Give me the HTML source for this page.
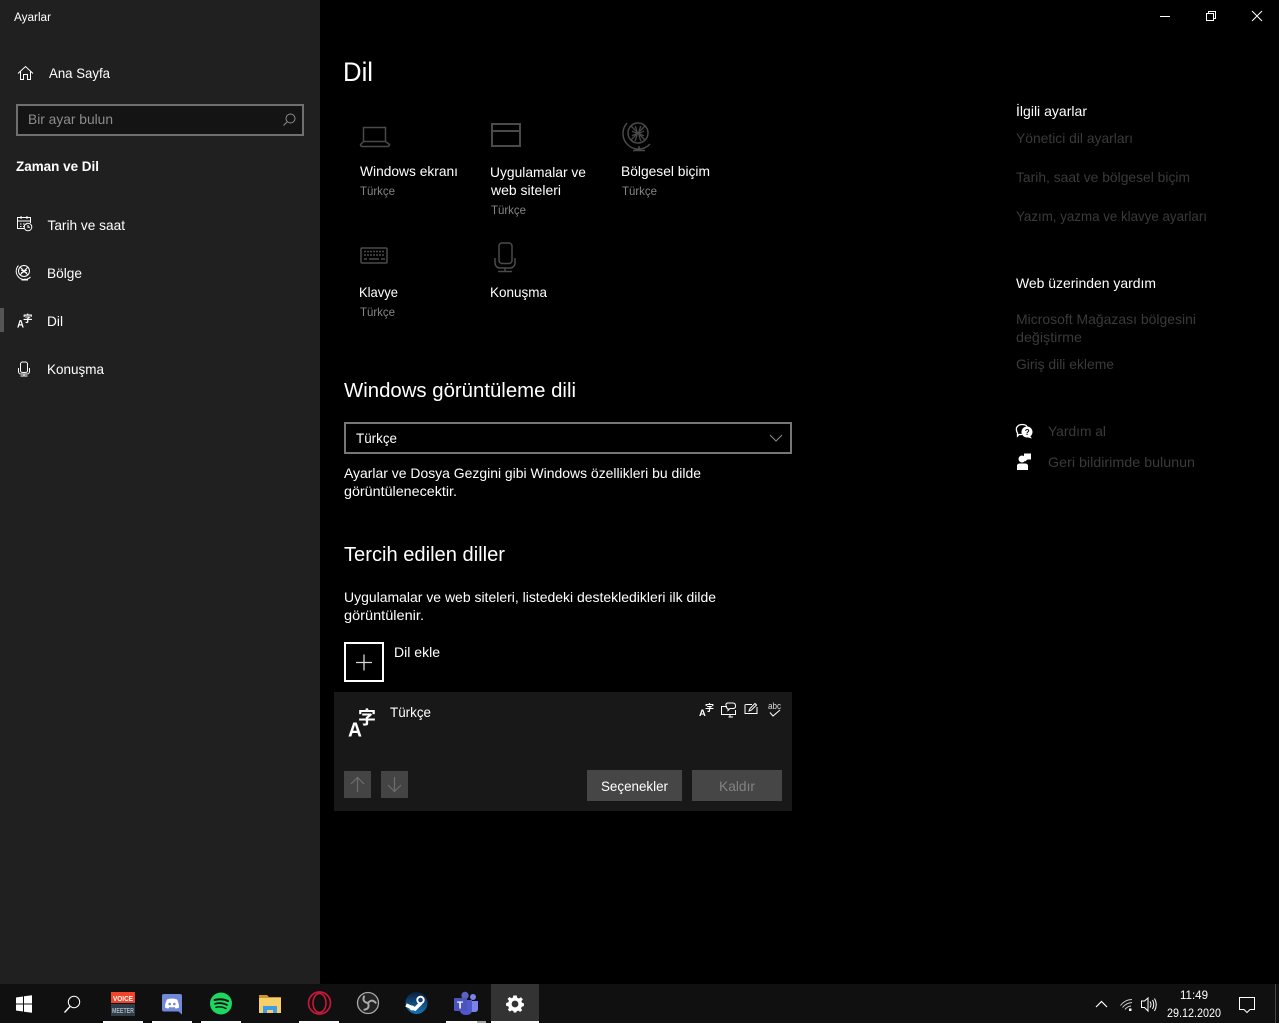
<!DOCTYPE html>
<html lang="tr"><head><meta charset="utf-8"><title>Ayarlar</title>
<style>
html,body{margin:0;padding:0;background:#000;width:1279px;height:1023px;overflow:hidden}
svg{display:block;position:absolute;left:0;top:0}
text{font-family:"Liberation Sans","Noto Sans CJK SC",sans-serif;font-size:14px;fill:#fff;white-space:pre}
.s{font-size:12px;fill:#858585}
.d{fill:#3a3a3a}
.i{fill:none;stroke:#fff;stroke-width:1}
.g{fill:none;stroke:#4a4a4a;stroke-width:1.5}
</style></head><body>
<svg width="1279" height="1023" viewBox="0 0 1279 1023" xmlns="http://www.w3.org/2000/svg">
<rect width="1279" height="1023" fill="#000"/>
<rect width="320" height="984" fill="#202020"/>

<!-- sidebar -->
<text x="14" y="21" style="font-size:11.5px" textLength="37" lengthAdjust="spacingAndGlyphs">Ayarlar</text>
<path class="i" d="M18 73.5 25.5 66.5 33 73.5M20.5 71.5V79.5H23.5V74.5H27.5V79.5H30.5V71.5"/>
<text x="49" y="78" textLength="61" lengthAdjust="spacingAndGlyphs">Ana Sayfa</text>
<rect x="17" y="105" width="286" height="30" fill="#141414" stroke="#6f6f6f" stroke-width="2"/>
<text x="28" y="124" style="fill:#8c8c8c" textLength="85" lengthAdjust="spacingAndGlyphs">Bir ayar bulun</text>
<circle cx="290.5" cy="118.5" r="4.5" fill="none" stroke="#8c8c8c"/><path d="M287 122 283.5 125.5" stroke="#8c8c8c" fill="none"/>
<text x="16" y="171" style="font-weight:700" textLength="83" lengthAdjust="spacingAndGlyphs">Zaman ve Dil</text>

<path class="i" d="M24 228.5H17.5V217.5H30.5V223M17.5 221H30.5M21 216V219M27 216V219"/>
<path stroke="#fff" stroke-dasharray="1.5 1.5" d="M20 224H27M20 226.5H24"/>
<circle class="i" cx="28" cy="227" r="3.8"/><path class="i" d="M28 225V227.3H30"/>
<text x="47.5" y="230" textLength="77.5" lengthAdjust="spacingAndGlyphs">Tarih ve saat</text>

<circle class="i" cx="24" cy="271" r="5.5" stroke-width="1.3"/><path class="i" d="M20 267 28 275M28 267 20 275M21 270Q24 272 27 270M21 273Q24 271 27 273"/><path class="i" d="M18.5 265.5A8 8 0 0 0 30.500 277M25 278.5V280M21.5 280H28"/>
<text x="47" y="278" textLength="35" lengthAdjust="spacingAndGlyphs">Bölge</text>

<rect x="0" y="308" width="4" height="24" fill="#555"/>
<text x="17" y="327.500" style="font-size:11px;font-weight:700" textLength="7" lengthAdjust="spacingAndGlyphs">A</text>
<text x="23" y="322" style="font-size:9.500px;font-weight:700">字</text>
<text x="47" y="326" textLength="16" lengthAdjust="spacingAndGlyphs">Dil</text>

<rect class="i" x="20.500" y="362" width="7" height="10.500" rx="2"/><path class="i" d="M18.500 368V371.500A2.500 2.500 0 0 0 21 374H27A2.500 2.500 0 0 0 29.500 371.500V368M24 374V376M20.500 376H27.500"/>
<text x="47" y="374" textLength="57" lengthAdjust="spacingAndGlyphs">Konuşma</text>

<!-- title bar -->
<path d="M1160 16.500H1170" stroke="#fff"/>
<path class="i" d="M1206.500 13.500H1213.500V20.500H1206.500ZM1208.500 13.500V11.500H1215.500V18.500H1213.500"/>
<path class="i" d="M1252 11 1262 21M1262 11 1252 21" />

<!-- main -->
<text x="343" y="81" style="font-size:27px" textLength="30" lengthAdjust="spacingAndGlyphs">Dil</text>

<path class="g" d="M363.500 127.500H385.500V141.500H363.500ZM363.500 141.500 360.500 144.500Q360.500 146.500 363 146.500H387Q389.500 146.500 389.500 144.500L385.500 141.500"/>
<text x="360" y="176" textLength="98" lengthAdjust="spacingAndGlyphs">Windows ekranı</text>
<text x="360" y="195" class="s" textLength="35" lengthAdjust="spacingAndGlyphs">Türkçe</text>

<path class="g" style="stroke-width:2" d="M492 124H520V146H492ZM492 131H520"/>
<text x="490" y="177" textLength="96" lengthAdjust="spacingAndGlyphs">Uygulamalar ve</text>
<text x="491" y="195" textLength="70" lengthAdjust="spacingAndGlyphs">web siteleri</text>
<text x="491" y="214" class="s" textLength="35" lengthAdjust="spacingAndGlyphs">Türkçe</text>

<circle class="g" cx="638" cy="133" r="10"/>
<path class="g" style="stroke-width:1.300" d="M631 126 645 140M645 126 631 140M632 131Q638 135 644 131M632 136Q638 132 644 136M635 126Q639 133 635 141M641 126Q637 133 641 141"/>
<path class="g" d="M627 123A15 15 0 0 0 650 144M639 146V150M633 150.500H645"/>
<text x="621" y="176" textLength="89" lengthAdjust="spacingAndGlyphs">Bölgesel biçim</text>
<text x="622" y="195" class="s" textLength="35" lengthAdjust="spacingAndGlyphs">Türkçe</text>

<rect class="g" x="361" y="248" width="26" height="15" rx="1"/>
<path stroke="#4a4a4a" stroke-width="1.500" stroke-dasharray="2 1" d="M364 251.500H385M364 255H385" fill="none"/><path stroke="#4a4a4a" stroke-width="1.500" d="M364 259H367M369 259H379M381 259H385" fill="none"/>
<text x="359" y="297" textLength="39" lengthAdjust="spacingAndGlyphs">Klavye</text>
<text x="360" y="316" class="s" textLength="35" lengthAdjust="spacingAndGlyphs">Türkçe</text>

<rect class="g" x="499" y="243" width="13" height="20.500" rx="3"/>
<path class="g" d="M495 258V263A5 5 0 0 0 500 268H510A5 5 0 0 0 515 263V258M505 268V271M498 271.500H512"/>
<text x="490" y="297" textLength="57" lengthAdjust="spacingAndGlyphs">Konuşma</text>

<text x="344" y="397" style="font-size:20px" textLength="232" lengthAdjust="spacingAndGlyphs">Windows görüntüleme dili</text>
<rect x="345" y="423" width="446" height="30" fill="#000" stroke="#767676" stroke-width="2"/>
<text x="356" y="443" textLength="41" lengthAdjust="spacingAndGlyphs">Türkçe</text>
<path d="M770 435 776 441 782 435" fill="none" stroke="#8c8c8c"/>
<text x="344" y="478" textLength="357" lengthAdjust="spacingAndGlyphs">Ayarlar ve Dosya Gezgini gibi Windows özellikleri bu dilde</text>
<text x="344" y="496" textLength="113" lengthAdjust="spacingAndGlyphs">görüntülenecektir.</text>

<text x="344" y="561" style="font-size:20px" textLength="161" lengthAdjust="spacingAndGlyphs">Tercih edilen diller</text>
<text x="344" y="602" textLength="372" lengthAdjust="spacingAndGlyphs">Uygulamalar ve web siteleri, listedeki destekledikleri ilk dilde</text>
<text x="344" y="620" textLength="80" lengthAdjust="spacingAndGlyphs">görüntülenir.</text>

<rect x="345" y="643" width="38" height="38" fill="#000" stroke="#fff" stroke-width="2"/>
<path d="M356 662.500H372M364 654.500V670.500" stroke="#d8d8d8" stroke-width="1.300"/>
<text x="394" y="657" textLength="46" lengthAdjust="spacingAndGlyphs">Dil ekle</text>

<rect x="334" y="692" width="458" height="119" fill="#181818"/>
<text x="348" y="736.500" style="font-size:20px;font-weight:700" textLength="14" lengthAdjust="spacingAndGlyphs">A</text>
<text x="358" y="724" style="font-size:18px;font-weight:700">字</text>
<text x="390" y="717" textLength="41" lengthAdjust="spacingAndGlyphs">Türkçe</text>

<text x="699" y="716" style="font-size:9.500px;font-weight:700">A</text>
<text x="705" y="711" style="font-size:9px;font-weight:700">字</text>
<path class="i" d="M727 706.500H721.500V714.500H735.500V710M728.500 717H733M730 715V717"/>
<path class="i" d="M726 704.500Q726 703 728 703H733Q735.500 703 735.500 706Q735.500 708.500 733 708.500H730L728 710.500V708.500Q726 708 726 706Z"/>
<path class="i" d="M745.500 704.500H752M757 707V713.500H745V704.500M749 711 750 708.500 755 703.500 756.500 705 751.500 710Z"/>
<text x="768" y="709" style="font-size:9px;fill:#ddd" textLength="13" lengthAdjust="spacingAndGlyphs">abc</text>
<path class="i" d="M770 712.500 773 716 780 710"/>

<rect x="344" y="771" width="27" height="27" fill="#444"/>
<rect x="381" y="771" width="27" height="27" fill="#444"/>
<path d="M357.500 777.500V792M351 784 357.500 777.500 364 784" fill="none" stroke="#6d6d6d" stroke-width="1.200"/>
<path d="M394.500 777V791.500M388 785 394.500 791.500 401 785" fill="none" stroke="#6d6d6d" stroke-width="1.200"/>
<rect x="587" y="770" width="95" height="31" fill="#464646"/>
<text x="601" y="791" textLength="67" lengthAdjust="spacingAndGlyphs">Seçenekler</text>
<rect x="692" y="770" width="90" height="31" fill="#464646"/>
<text x="719" y="791" style="fill:#828282" textLength="36" lengthAdjust="spacingAndGlyphs">Kaldır</text>

<!-- right column -->
<text x="1016" y="116" textLength="71" lengthAdjust="spacingAndGlyphs">İlgili ayarlar</text>
<text x="1016" y="143" class="d" textLength="117" lengthAdjust="spacingAndGlyphs">Yönetici dil ayarları</text>
<text x="1016" y="182" class="d" textLength="174" lengthAdjust="spacingAndGlyphs">Tarih, saat ve bölgesel biçim</text>
<text x="1016" y="221" class="d" textLength="191" lengthAdjust="spacingAndGlyphs">Yazım, yazma ve klavye ayarları</text>
<text x="1016" y="288" textLength="140" lengthAdjust="spacingAndGlyphs">Web üzerinden yardım</text>
<text x="1016" y="324" class="d" textLength="180" lengthAdjust="spacingAndGlyphs">Microsoft Mağazası bölgesini</text>
<text x="1016" y="342" class="d" textLength="66" lengthAdjust="spacingAndGlyphs">değiştirme</text>
<text x="1016" y="369" class="d" textLength="98" lengthAdjust="spacingAndGlyphs">Giriş dili ekleme</text>

<path fill="none" stroke="#fff" stroke-width="1.300" d="M1022 434.500H1019L1017.500 436V433Q1016 431 1016.500 428Q1018 424.500 1022 424.500Q1026 424.500 1027 426.500"/>
<circle cx="1027" cy="432" r="5.500" fill="#fff"/><path d="M1030 436 1032 438.500 1028 437.500Z" fill="#fff"/>
<text x="1024.800" y="435" style="font-size:8px;font-weight:700;fill:#000">?</text>
<text x="1048" y="436" class="d" textLength="58" lengthAdjust="spacingAndGlyphs">Yardım al</text>

<circle cx="1022" cy="459" r="3.500" fill="#fff"/>
<path d="M1017 470V466Q1017 463.500 1020 463.500H1025Q1028 463.500 1028 466V470Z" fill="#fff"/>
<path d="M1024 453.500H1031V459.500H1027.500L1025 461.500V459.500H1024Z" fill="#fff"/>
<text x="1048" y="467" class="d" textLength="147" lengthAdjust="spacingAndGlyphs">Geri bildirimde bulunun</text>

<!-- taskbar -->
<rect x="0" y="984" width="1279" height="39" fill="#101010"/>
<rect x="491" y="984" width="48" height="39" fill="#333"/>
<path fill="#fff" d="M16 997.500 23 996.500V1003.500H16ZM24 996.300 32 995.200V1003.500H24ZM16 1004.500H23V1011.500L16 1010.500ZM24 1004.500H32V1012.800L24 1011.700Z"/>
<circle class="i" cx="74" cy="1002" r="5.700" stroke-width="1.300"/><path class="i" style="stroke-width:1.300" d="M70 1006.500 64.500 1012.500"/>

<rect x="111" y="992" width="24" height="11" fill="#f0452b"/>
<text x="113" y="1001" style="font-size:7.500px;font-weight:700" textLength="20" lengthAdjust="spacingAndGlyphs">VOICE</text>
<rect x="111" y="1004" width="24" height="12" fill="#2f3d4b"/>
<text x="112" y="1013" style="font-size:7px;font-weight:700;fill:#aab2ba" textLength="22" lengthAdjust="spacingAndGlyphs">MEETER</text>

<path fill="#7289da" d="M164 994H180Q182 994 182 996V1014.500L178.500 1011.500H164Q162 1011.500 162 1009.500V996Q162 994 164 994Z"/>
<path fill="#fff" d="M167 999.500Q172 997.500 177 999.500 179 1003 179 1007.500 177.500 1008.500 175.500 1008.500L174.500 1007Q172 1007.800 169.500 1007L168.500 1008.500Q166.500 1008.500 165 1007.500 165 1003 167 999.500Z"/>
<circle cx="169.700" cy="1004" r="1.300" fill="#7289da"/><circle cx="174.300" cy="1004" r="1.300" fill="#7289da"/>

<circle cx="221" cy="1003.500" r="11" fill="#1ed760"/>
<path fill="none" stroke="#111" stroke-linecap="round" stroke-width="2" d="M214.500 1000Q221.500 998 228 1001"/><path fill="none" stroke="#111" stroke-linecap="round" stroke-width="1.700" d="M215 1003.800Q221.500 1002 227 1005"/><path fill="none" stroke="#111" stroke-linecap="round" stroke-width="1.400" d="M216 1007.300Q221 1006 226 1008.500"/>

<path fill="#c8962c" d="M259 995H267L269 997H281V1000H259Z"/>
<rect x="259" y="998" width="22" height="15" fill="#f6cf68"/>
<path fill="#3d9be9" d="M263 1013V1006H277V1013H273V1010H267V1013Z"/>

<circle cx="319.500" cy="1003" r="11" fill="none" stroke="#c8173a" stroke-width="1.700"/>
<ellipse cx="319.500" cy="1003" rx="6.500" ry="9.500" fill="none" stroke="#d01a3c" stroke-width="1.500"/>

<circle cx="368" cy="1003" r="10.500" fill="#222" stroke="#aaa" stroke-width="1.300"/>
<g fill="none" stroke="#aaa" stroke-width="2" stroke-linecap="round">
<path d="M368 1003Q362 1002 364 996.500"/>
<path d="M368 1003Q362 1002 364 996.500" transform="rotate(120 368 1003)"/>
<path d="M368 1003Q362 1002 364 996.500" transform="rotate(240 368 1003)"/>
</g>

<defs><linearGradient id="st" x1="0" y1="0" x2="0" y2="1"><stop offset="0" stop-color="#0b1f3f"/><stop offset="1" stop-color="#1575b5"/></linearGradient></defs>
<circle cx="416.500" cy="1003" r="11" fill="url(#st)"/>
<path d="M406 1005 415 1009 421 1003" stroke="#fff" stroke-width="3.500" fill="none"/>
<circle cx="420.500" cy="1000" r="4.200" fill="#fff"/><circle cx="420.500" cy="1000" r="2.300" fill="#1b3f6b"/><circle cx="412" cy="1008" r="2.500" fill="#fff"/>

<circle cx="473" cy="997" r="3" fill="#7b83eb"/><circle cx="465" cy="995.500" r="3.700" fill="#5b62c0"/>
<path fill="#7b83eb" d="M470 1001H478V1009Q478 1012 474.500 1012H470Z"/>
<path fill="#5059c9" d="M459 1000H472V1010Q472 1015 466 1015 460 1015 459 1008Z"/>
<rect x="454" y="998" width="13" height="13" rx="1" fill="#4b53bc"/>
<text x="457" y="1008.500" style="font-size:10px;font-weight:700">T</text>

<g transform="translate(515 1004) scale(.85)">
<path fill="#fff" d="M-2-9H2L2.600-6.300 4.600-5.500 7-7 9.300-4.500 7.500-2.400 8.200-.5 10.500.2V3.500L7.900 4.200 7.100 6.100 8.500 8.400 6 10.200 3.900 8.800 2 9.500 1.500 11H-1.500L-2 9.200-3.900 8.500-6 9.900-8.500 7.700-7.100 5.700-7.900 3.800-10.500 3V-.2L-7.900-.9-7.100-2.800-8.800-5-6.500-7.200-4.300-5.800-2.500-6.500Z" transform="translate(0 -1)"/>
<circle r="4" cy="0" fill="#333"/>
</g>

<rect x="103" y="1021" width="40" height="2" fill="#fff"/>
<rect x="152" y="1021" width="40" height="2" fill="#fff"/>
<rect x="201" y="1021" width="40" height="2" fill="#fff"/>
<rect x="299" y="1021" width="40" height="2" fill="#fff"/>
<rect x="446" y="1021" width="31" height="2" fill="#fff"/>
<rect x="477" y="1021" width="9" height="2" fill="#aaa"/>
<rect x="491" y="1021" width="48" height="2" fill="#fff"/>

<path d="M1096 1007 1101.500 1001.500 1107 1007" fill="none" stroke="#fff" stroke-width="1.200"/>
<path fill="none" stroke="#ccc" d="M1120.500 1005.500Q1125 999.500 1132 999.500M1122.500 1007.500Q1126 1003 1132 1002.500M1125 1009.500Q1127 1006.500 1131 1006"/>
<rect x="1129" y="1008.500" width="2.500" height="2.500" fill="#fff"/>
<path class="i" d="M1141.500 1001H1144.500L1148 998V1011L1144.500 1007.500H1141.500Z"/>
<path class="i" d="M1150 1001.500Q1152 1004.500 1150 1007.500M1152.500 1000Q1155 1004.500 1152.500 1009M1154.500 998.500Q1158 1004.500 1154.500 1011"/>
<text x="1180" y="999" style="font-size:12px" textLength="28" lengthAdjust="spacingAndGlyphs">11:49</text>
<text x="1167" y="1017" style="font-size:12px" textLength="54" lengthAdjust="spacingAndGlyphs">29.12.2020</text>
<path class="i" d="M1239.500 997.500H1254.500V1009.500H1250L1247 1012.500 1244 1009.500H1239.500Z"/>
<rect x="1275" y="984" width="1" height="39" fill="#444"/>
</svg>
</body></html>
